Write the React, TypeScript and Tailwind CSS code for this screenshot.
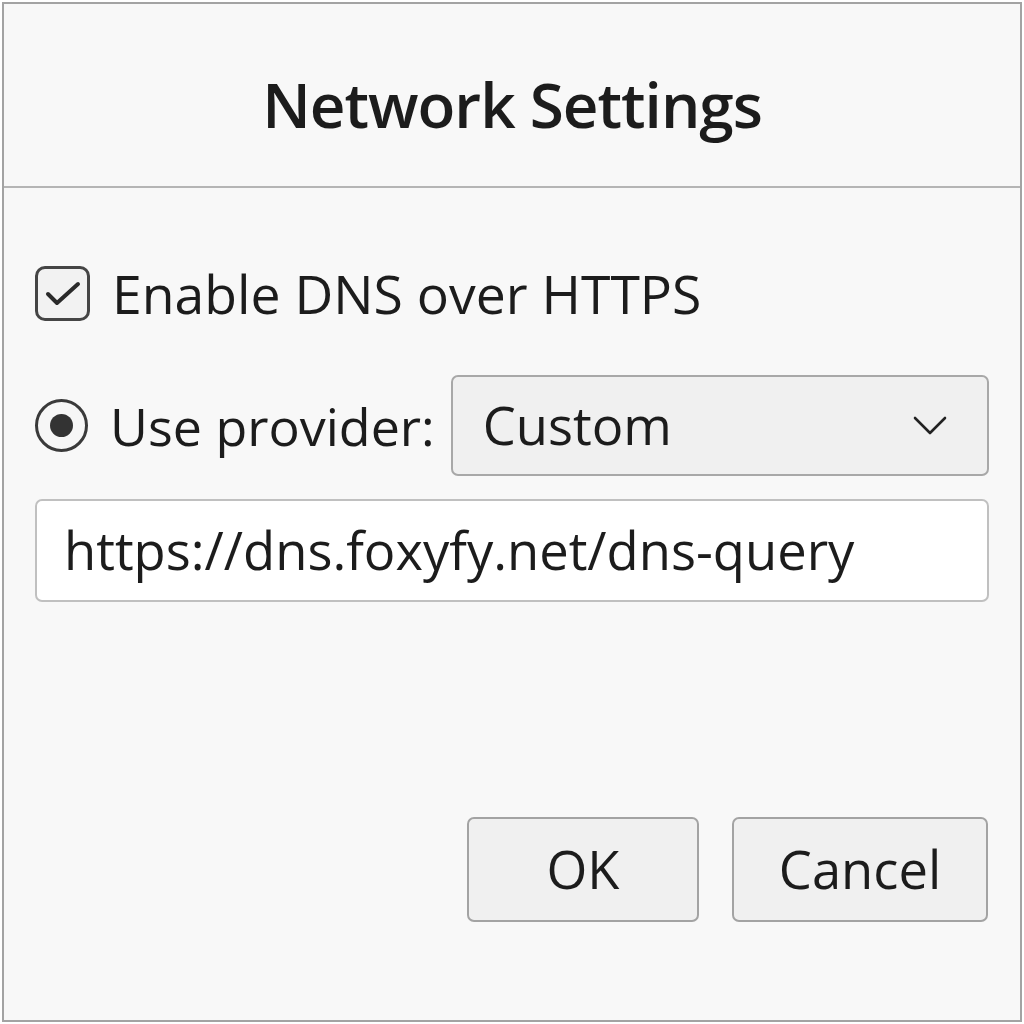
export default function App() {
  return (
    <div className="h-[1024px] w-[1024px] bg-white p-[2px] font-['Open_Sans',sans-serif] text-[#1c1c1c]">
      <div className="flex h-full w-full flex-col border-2 border-[#a3a3a3] bg-[#f8f8f8]">
        <div className="flex h-[184px] items-center justify-center border-b-2 border-[#b5b5b5] pt-[18px]">
          <h1 className="text-[62px] leading-none font-semibold tracking-[-1px]">Network Settings</h1>
        </div>

        <div className="flex flex-1 flex-col px-[31px]">
          <label className="mt-[78px] flex items-center gap-[22px]">
            <span className="flex h-[55px] w-[55px] items-center justify-center rounded-[10px] border-[3px] border-[#454545] bg-[#f2f2f2]">
              <svg viewBox="0 0 36 28" width="36" height="28" fill="none" stroke="#2a2a2a" strokeWidth="4" strokeLinecap="round" strokeLinejoin="round">
                <path d="M3 14l9 9L33 4" />
              </svg>
            </span>
            <span className="text-[53.5px] leading-none">Enable DNS over HTTPS</span>
          </label>

          <div className="mt-[54px] flex items-center">
            <span className="flex h-[53px] w-[53px] items-center justify-center rounded-full border-[3px] border-[#3a3a3a] bg-[#f6f6f6]">
              <span className="h-[23px] w-[23px] rounded-full bg-[#333]" />
            </span>
            <span className="ml-[22px] text-[52px] leading-none">Use provider:</span>
            <div className="ml-[16px] flex h-[101px] flex-1 items-center justify-between rounded-[7px] border-2 border-[#a8a8a8] bg-[#f0f0f0] pl-[30px] pr-[40px]">
              <span className="text-[52.5px] leading-none">Custom</span>
              <svg viewBox="0 0 34 19" width="34" height="19" fill="none" stroke="#222" strokeWidth="2.6" strokeLinecap="round" strokeLinejoin="round">
                <path d="M2 2l15 15L32 2" />
              </svg>
            </div>
          </div>

          <div className="mt-[23px] flex h-[103px] items-center rounded-[7px] border-2 border-[#c0c0c0] bg-white px-[27px]">
            <span className="text-[52.5px] leading-none">https://dns.foxyfy.net/dns-query</span>
          </div>

          <div className="mt-[215px] flex justify-end gap-[33px] pr-[1px]">
            <button className="h-[105px] w-[232px] rounded-[7px] border-2 border-[#a3a3a3] bg-[#f0f0f0] text-[52.5px] leading-none">OK</button>
            <button className="h-[105px] w-[256px] rounded-[7px] border-2 border-[#a3a3a3] bg-[#f0f0f0] text-[52.5px] leading-none">Cancel</button>
          </div>
        </div>
      </div>
    </div>
  );
}
